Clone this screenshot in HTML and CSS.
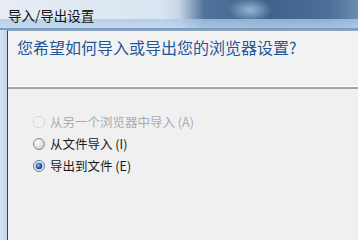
FILE: index.html
```html
<!DOCTYPE html>
<html lang="zh-CN">
<head>
<meta charset="utf-8">
<title>导入/导出设置</title>
<link rel="stylesheet" href="styles.css">
</head>
<body>
<div class="screen">
  <div class="titlebar"><span class="title">导入/导出设置</span></div>
  <div class="window">
    <div class="frame"></div>
    <div class="content">
      <div class="header">
        <h1 class="instruction">您希望如何导入或导出您的浏览器设置?</h1>
      </div>
      <ul class="options">
        <li class="option disabled">
          <svg class="radio" width="12" height="12" viewBox="0 0 12 12"><circle cx="6" cy="6" r="5.5" fill="#f6f6f6" stroke="#d4d4d4"/><circle cx="6" cy="6" r="3.5" fill="#efefef"/></svg>
          <span class="label">从另一个浏览器中导入 (A)</span>
        </li>
        <li class="option">
          <svg class="radio" width="12" height="12" viewBox="0 0 12 12"><defs><radialGradient id="g1" cx="0.35" cy="0.35" r="0.7"><stop offset="0" stop-color="#ffffff"/><stop offset="1" stop-color="#cfcfcf"/></radialGradient></defs><circle cx="6" cy="6" r="5.5" fill="url(#g1)" stroke="#8a8a8a"/></svg>
          <span class="label">从文件导入 (I)</span>
        </li>
        <li class="option">
          <svg class="radio" width="12" height="12" viewBox="0 0 12 12"><defs><radialGradient id="g2" cx="0.4" cy="0.4" r="0.6"><stop offset="0" stop-color="#9cc6ec"/><stop offset="0.6" stop-color="#2f66a6"/><stop offset="1" stop-color="#163d6e"/></radialGradient></defs><circle cx="6" cy="6" r="5.5" fill="#dfe9f3" stroke="#5b7fa6"/><circle cx="6" cy="6" r="3.3" fill="url(#g2)"/></svg>
          <span class="label">导出到文件 (E)</span>
        </li>
      </ul>
    </div>
  </div>
</div>
</body>
</html>
```

FILE: styles.css
```css
html, body {
  margin: 0;
  padding: 0;
  background: #f0f0f0;
}
.screen {
  width: 358px;
  height: 240px;
  overflow: hidden;
  display: flex;
  flex-direction: column;
  font-family: "Noto Sans CJK SC", "Liberation Sans", sans-serif;
}
.titlebar {
  height: 30px;
  flex: none;
  box-sizing: border-box;
  padding-left: 8px;
  display: flex;
  align-items: center;
  background-image:
    linear-gradient(to bottom, rgba(0,0,0,0) 0, rgba(0,0,0,0) 62%, rgba(168,198,230,0.75) 62%, rgba(190,214,238,0.8) 94%, #7e9dbf 94%),
    radial-gradient(ellipse 22px 12px at 250px 10px, rgba(160,190,220,0.9), rgba(160,190,220,0)),
    linear-gradient(to right, #e6edf5 0, #dae5f1 45%, #c7d6e7 50%, #4f739b 57%, #3f638c 75%, #4b6f98 92%, #6c8db3 100%);
}
.title {
  font-size: 13.5px;
  line-height: 16px;
  color: #111;
  margin-top: -1px;
}
.window {
  flex: 1;
  display: flex;
}
.frame {
  width: 7px;
  flex: none;
  background: linear-gradient(to right, #d7e5f3, #bfd5ec);
}
.content {
  flex: 1;
  background: #f0f0f0;
  border-left: 1px solid #2f435c;
  border-top: 1px solid #8fa7c2;
}
.header {
  height: 56px;
  box-sizing: border-box;
  padding: 5px 0 0 9px;
  background: #f2f2f2;
  border-bottom: 1px solid #ffffff;
}
.instruction {
  margin: 0;
  font-size: 16px;
  line-height: 22px;
  font-weight: normal;
  color: #23579a;
}
.options {
  list-style: none;
  margin: 0;
  padding: 22px 0 0 25px;
  border-top: 2px solid #a3a3a3;
}
.option {
  height: 22px;
  display: flex;
  align-items: center;
  gap: 5px;
  font-size: 12.5px;
  color: #1a1a1a;
}
.option.disabled {
  color: #a5adb8;
}
.radio {
  flex: none;
  display: block;
}
.label {
  line-height: 14px;
}
```
